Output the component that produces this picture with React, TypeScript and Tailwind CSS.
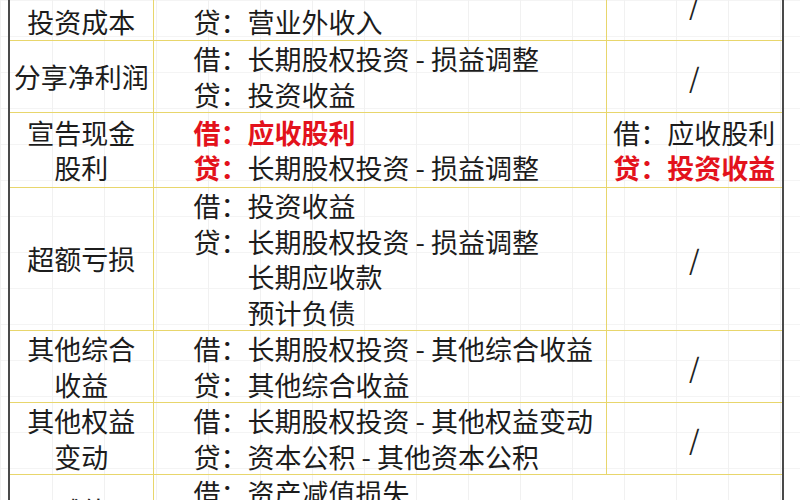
import React from "react";

type Line = { label?: string; text: string; labelRed?: boolean; textRed?: boolean };

interface Row {
  title: string[];
  entries: Line[];
  other: Line[] | null;
  height?: string;
}

const rows: Row[] = [
  {
    title: ["调整初始", "投资成本"],
    entries: [
      { label: "借：", text: "长期股权投资 - 投资成本" },
      { label: "贷：", text: "营业外收入" },
    ],
    other: [],
    height: "h-[74px]",
  },
  {
    title: ["分享净利润"],
    entries: [
      { label: "借：", text: "长期股权投资 - 损益调整" },
      { label: "贷：", text: "投资收益" },
    ],
    other: [],
  },
  {
    title: ["宣告现金", "股利"],
    entries: [
      { label: "借：", text: "应收股利", labelRed: true, textRed: true },
      { label: "贷：", text: "长期股权投资 - 损益调整", labelRed: true },
    ],
    other: [
      { label: "借：", text: "应收股利" },
      { label: "贷：", text: "投资收益", labelRed: true, textRed: true },
    ],
    height: "h-[75px]",
  },
  {
    title: ["超额亏损"],
    entries: [
      { label: "借：", text: "投资收益" },
      { label: "贷：", text: "长期股权投资 - 损益调整" },
      { text: "长期应收款" },
      { text: "预计负债" },
    ],
    other: [],
  },
  {
    title: ["其他综合", "收益"],
    entries: [
      { label: "借：", text: "长期股权投资 - 其他综合收益" },
      { label: "贷：", text: "其他综合收益" },
    ],
    other: [],
  },
  {
    title: ["其他权益", "变动"],
    entries: [
      { label: "借：", text: "长期股权投资 - 其他权益变动" },
      { label: "贷：", text: "资本公积 - 其他资本公积" },
    ],
    other: [],
  },
  {
    title: ["减值"],
    entries: [
      { label: "借：", text: "资产减值损失" },
      { label: "贷：", text: "长期股权投资减值准备" },
    ],
    other: null,
  },
];

function EntryLine({ line }: { line: Line }) {
  return (
    <div className="flex whitespace-nowrap">
      <span className={`w-[54px] shrink-0 ${line.labelRed ? "text-[#e3121c] font-bold" : ""}`}>
        {line.label ?? ""}
      </span>
      <span className={line.textRed ? "text-[#e3121c] font-bold" : ""}>{line.text}</span>
    </div>
  );
}

export default function App() {
  return (
    <div className="w-[800px] h-[500px] overflow-hidden bg-white bg-[linear-gradient(to_right,#f1f1f1_1px,transparent_1px),linear-gradient(to_bottom,#f4f4f4_1px,transparent_1px)] bg-[size:52px_36px] font-['Noto_Sans_CJK_SC',sans-serif] text-[27px] leading-[35.5px] text-[#1c1c1c]">
      <table className="ml-2 -mt-[34px] w-[776px] border-collapse border-l-2 border-r-2 border-l-[#4a4a4a] border-r-[#4a4a4a] table-fixed">
        <colgroup>
          <col className="w-[144px]" />
          <col className="w-[453px]" />
          <col />
        </colgroup>
        <tbody>
          {rows.map((row, i) => (
            <tr key={i} className={row.height ?? ""}>
              <td className="border-y border-r border-[#e8d66c] text-center align-middle p-0">
                {row.title.map((t) => (
                  <div key={t}>{t}</div>
                ))}
              </td>
              <td
                colSpan={row.other === null ? 2 : 1}
                className="border-y border-r border-[#e8d66c] align-middle pl-10 py-0"
              >
                {row.entries.map((l, j) => (
                  <EntryLine key={j} line={l} />
                ))}
              </td>
              {row.other !== null && (
                <td className="border-y border-[#e8d66c] align-middle text-center p-0">
                  {row.other.length === 0 ? (
                    <span className="text-[#222]">/</span>
                  ) : (
                    <div className="inline-block text-left">
                      {row.other.map((l, j) => (
                        <div key={j} className="whitespace-nowrap">
                          <span className={l.labelRed ? "text-[#e3121c] font-bold" : ""}>{l.label}</span>
                          <span className={l.textRed ? "text-[#e3121c] font-bold" : ""}>{l.text}</span>
                        </div>
                      ))}
                    </div>
                  )}
                </td>
              )}
            </tr>
          ))}
        </tbody>
      </table>
    </div>
  );
}
